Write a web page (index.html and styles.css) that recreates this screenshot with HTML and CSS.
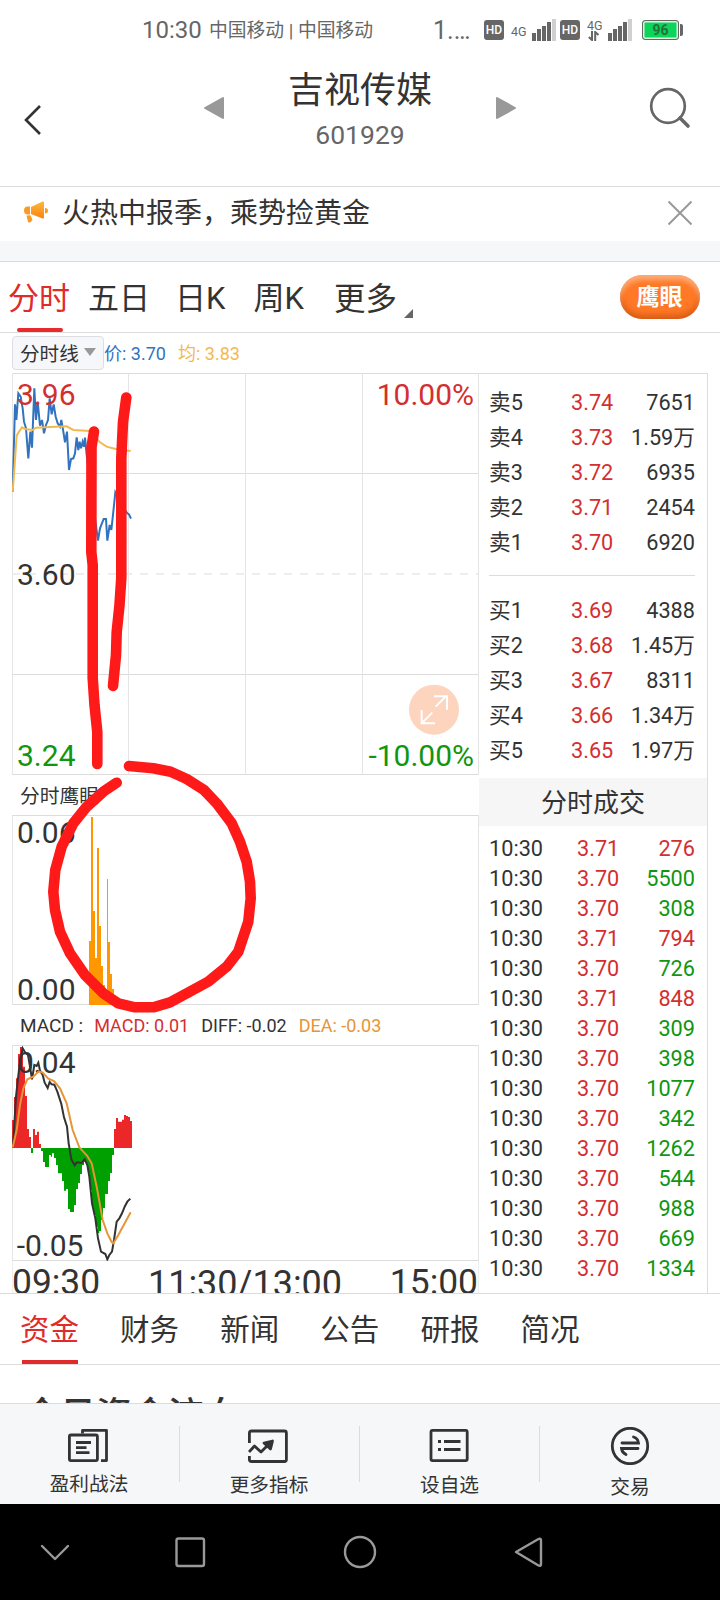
FILE: index.html
```html
<!DOCTYPE html>
<html lang="zh-Hans">
<head>
  <meta charset="UTF-8" />
  <meta name="viewport" content="width=720" />
  <title>吉视传媒 601929</title>
  <link rel="stylesheet" href="styles.css">
</head>
<body>
  <div class="status-bar">
    <span class="clock">10:30</span>
    <span class="carrier">中国移动 | 中国移动</span>
    <span class="speed">1.…</span>
    <span class="hd">HD</span>
    <span class="net">4G</span>
    <svg class="signal" width="24" height="22" viewBox="0 0 24 22">
      <path d="M0 14h4v8H0zM5 10h4v12H5zM10 7h4v15h-4zM15 3h4v19h-4z" fill="#666"/>
      <path d="M20 0h4v22h-4z" fill="#d0d0d0"/>
    </svg>
    <span class="hd">HD</span>
    <span class="net net-data">4G
      <svg width="12" height="10" viewBox="0 0 12 10" fill="none" stroke="#666" stroke-width="2"><path d="M4 0v9L.8 6M7.200 10V1l3.300 3"/></svg>
    </span>
    <svg class="signal" width="24" height="22" viewBox="0 0 24 22">
      <path d="M0 14h4v8H0zM5 10h4v12H5zM10 7h4v15h-4zM15 3h4v19h-4z" fill="#666"/>
      <path d="M20 0h4v22h-4z" fill="#d0d0d0"/>
    </svg>
    <span class="battery">96</span>
    <i class="battery-cap"></i>
  </div>

  <header class="header">
    <svg class="back" width="18" height="32" viewBox="0 0 18 32"><path d="M16 2 2 16l14 14" fill="none" stroke="#333" stroke-width="2.6"/></svg>
    <svg class="prev" width="20" height="22" viewBox="0 0 20 22"><path d="M19 1v20L1 11z" fill="#999" stroke="#999" stroke-width="2" stroke-linejoin="round"/></svg>
    <div class="stock">
      <h1>吉视传媒</h1>
      <p>601929</p>
    </div>
    <svg class="next" width="20" height="22" viewBox="0 0 20 22"><path d="M1 1v20l18-10z" fill="#999" stroke="#999" stroke-width="2" stroke-linejoin="round"/></svg>
    <svg class="search" width="42" height="42" viewBox="0 0 42 42" fill="none" stroke="#666" stroke-width="2.7">
      <circle cx="19" cy="19" r="16.8"/>
      <path d="m31 31 8 8" stroke-width="3.6" stroke-linecap="round"/>
    </svg>
  </header>

  <div class="notice">
    <svg width="26" height="24" viewBox="0 0 26 24">
      <defs>
        <linearGradient id="horn" x1="0" y1="0" x2="0" y2="1">
          <stop offset="0" stop-color="#fdb83c"/>
          <stop offset="1" stop-color="#f9820f"/>
        </linearGradient>
      </defs>
      <path d="M8 7 19.500 1.500Q21 1 21 2.500V17q0 2-1.500 1.500L8 14z" fill="url(#horn)"/>
      <path d="M7 6.500v8H4q-3-.5-3-4t3-4zM22 8q3 0 3 2.700T22 13.500z" fill="#f99a25"/>
      <path d="m3.500 15.500 4-.3 2 4.800-2.500 2.800-2-.8z" fill="#f99a25"/>
    </svg>
    <span>火热中报季，乘势捡黄金</span>
    <svg class="close" width="26" height="26" viewBox="0 0 26 26"><path d="m1.500 1.500 23 23m0-23-23 23" stroke="#999" stroke-width="2"/></svg>
  </div>

  <nav class="periods">
    <a class="active">分时</a>
    <a>五日</a>
    <a>日K</a>
    <a>周K</a>
    <a class="more">更多</a>
    <button class="eagle">鹰眼</button>
  </nav>

  <main class="quote">
    <section class="charts">
      <div class="legend">
        <span class="select">分时线<i></i></span>
        <span class="price">价: 3.70</span>
        <span class="avg">均: 3.83</span>
      </div>

      <!-- price, three units per pixel -->
      <svg class="chart" width="467" height="402" viewBox="36 24 1401 1206">
        <g class="grid">
          <path d="M36 25.500H1437M36 325.500H1437M36 928.500H1437M36 1228.500H1437"/>
          <path d="M37.500 24V1230M385.500 24V1230M736.500 24V1230M1087.500 24V1230M1435.500 24V1230" class="vert"/>
          <path d="M36 627H1437" class="dash"/>
        </g>
        <polyline class="line-price" points="38,380 45,118 49,165 55,85 62,95 68,130 72,170 78,190 85,280 91,200 96,248 103,70 108,165 113,110 120,182 126,165 132,205 138,180 144,165 149,100 155,148 161,118 167,155 173,175 180,185 184,165 190,200 195,232 201,200 207,315 213,282 220,280 225,265 230,217 235,255 239,230 243,250 248,230 252,245 255,218 260,270 294,527 300,490 311,462 318,462 322,527 329,480 334,495 340,440 346,382 364,420 382,445 387,448 393,461"/>
        <polyline class="line-avg" points="38,380 44,300 50,212 57,200 66,187 75,192 98,195 108,188 150,186 200,184 220,195 270,198 300,232 320,245 350,253 392,258"/>
        <g class="labels">
          <text x="51" y="119" class="up">3.96</text>
          <text x="51" y="661">3.60</text>
          <text x="51" y="1202" class="down">3.24</text>
          <text x="1422" y="120" class="up end">10.00%</text>
          <text x="1422" y="1202" class="down end">-10.00%</text>
        </g>
        <g transform="translate(1302 1034)">
          <circle r="75" fill="#fdd4bd"/>
          <path d="M5-9 38-42M0-40H39V0M-5 9-37 41M-37 1V41H3" fill="none" stroke="#fff" stroke-width="6"/>
        </g>
      </svg>

      <div class="chart-title">分时鹰眼</div>
      <svg class="chart" width="467" height="190" viewBox="36 165 1401 570">
        <g class="grid">
          <path d="M36 166.500H1437M36 733.500H1437"/>
          <path d="M37.500 165V735M1435.500 165V735" class="vert"/>
        </g>
        <g class="labels">
          <text x="51" y="248">0.06</text>
          <text x="51" y="719">0.00</text>
        </g>
        <path fill="#ff9800" d="M267 735V543H273V171H279V453H285V594H291V264H297V498H303V618H309V675H315V695H321V357H324V546H330V642H336V687H342V735z"/>
      </svg>

      <div class="chart-title macd-title">
        <span>MACD :</span>
        <span class="up">MACD: 0.01</span>
        <span>DIFF: -0.02</span>
        <span class="dea">DEA: -0.03</span>
      </div>
      <svg class="chart" width="467" height="216" viewBox="36 45 1401 648">
        <g class="grid">
          <path d="M36 46.500H1437M36 691.500H1437"/>
          <path d="M37.500 45V693M1435.500 45V693" class="vert"/>
        </g>
        <path fill="#eb2727" d="M36 354V270H42V201H48V145H54V72H60V51H69V110H75V198H81V297H87V321H93V354zM99 354V297H105V315H111V305H117V342H123V354zM342 354V297H348V264H354V275H366V269H372V255H378V258H384V261H390V273H396V354z"/>
        <path fill="#00a000" d="M93 354V369H99V354zM123 354V363H129V396H135V411H147V375H153V380H156V370H162V384H168V405H174V430H186V453H192V482H198V477H204V537H210V546H222V525H228V477H234V459H240V432H246V405H252V395H258V405H264V430H270V480H276V530H282V555H288V590H294V609H298V603H303V570H309V534H315V492H324V453H330V429H336V375H342V354z"/>
        <g class="labels">
          <text x="51" y="128">0.04</text>
          <text x="50" y="677">-0.05</text>
        </g>
        <polyline class="line-diff" points="39,350 48,200 58,110 68,55 76,68 84,75 90,110 96,148 103,105 110,108 115,98 120,122 128,135 134,158 143,174 149,156 155,163 163,164 172,185 184,222 192,262 201,290 206,340 214,388 224,406 230,397 245,399 254,388 262,405 268,440 276,520 286,565 294,625 303,665 316,672 322,688 328,675 336,665 342,630 350,575 358,565 366,550 374,530 382,515 391,506"/>
        <polyline class="line-dea" points="38,352 50,300 60,225 70,175 82,148 100,140 116,124 128,128 145,146 162,153 180,175 200,220 218,300 238,352 262,378 275,400 290,470 308,570 322,610 335,636 340,640 355,615 392,547"/>
      </svg>
      <div class="axis"><span>09:30</span><span class="noon">11:30/13:00</span><span>15:00</span></div>
    </section>

    <aside class="panel">
      <div class="book" id="sells"></div>
      <hr>
      <div class="book" id="buys"></div>
      <h2>分时成交</h2>
      <div class="trades" id="trades"></div>
    </aside>

    <!-- hand-drawn marks over the charts -->
    <svg class="marks" width="479" height="960" viewBox="0 333 479 960">
      <polyline points="94,431.500 91.500,447 91.300,552 92.700,565 92.700,678 94.500,705 97.300,732 97.300,764"/>
      <polyline points="126.300,397.500 123,422 121.300,458 121.300,578 119.500,605 116.700,632 116,655 113,686"/>
      <polyline points="129,766 153.300,768.300 170.700,771.700 186.700,779 204,790 216.700,803.300 231.700,823.300 240,841.700 246.700,861.700 250,881.700 250.700,898.300 248.300,921.700 238.300,951.700 226.700,966.700 208.300,981.700 186.700,993.300 170,1002.300 153.300,1007.300 135,1007.300 118.300,1003.300 103.300,993.300 85,975 70,953.300 60,931.700 55,910 53.300,891.700 55.300,870 61.700,846.700 73.300,823.300 86.700,806.700 103.300,791.700 116.700,782.700"/>
    </svg>
  </main>

  <nav class="info-tabs">
    <a class="active">资金</a>
    <a>财务</a>
    <a>新闻</a>
    <a>公告</a>
    <a>研报</a>
    <a>简况</a>
  </nav>
  <div class="flow-title">今日资金流向</div>

  <footer class="toolbar">
    <a>
      <svg width="42" height="38" viewBox="0 0 42 38" fill="none" stroke="#333" stroke-width="2.800" stroke-linejoin="round">
        <rect x="1.400" y="8" width="28" height="25.600" rx="1.500"/>
        <path d="M14.500 6.500V3.400h24v30.200h-5.500M8 15.500h15M8 20.600h10.500M8 25.700h13.500"/>
      </svg>
      <span>盈利战法</span>
    </a>
    <a>
      <svg width="42" height="38" viewBox="0 0 42 38" fill="none" stroke="#333" stroke-width="2.800" stroke-linejoin="round">
        <path d="M1.400 16V6q0-2 2-2h33q2 0 2 2v26.500q0 2-2 2h-33q-2 0-2-2V29"/>
        <path d="m1 25 5.500-6 6.500 6 8-8" />
        <path d="m16 16 8.500-2-2 8z" fill="#333"/>
      </svg>
      <span class="low">更多指标</span>
    </a>
    <a>
      <svg width="42" height="38" viewBox="0 0 42 38" fill="none" stroke="#333" stroke-width="2.800">
        <rect x="2" y="3.400" width="36.200" height="30.200" rx="1.500"/>
        <path d="M15 14.500h16.500M15 22.500h16.500M9 14.500h3M9 22.500h3"/>
      </svg>
      <span class="low">设自选</span>
    </a>
    <a>
      <svg width="42" height="38" viewBox="0 0 42 38" fill="none" stroke="#333" stroke-width="2.800" stroke-linecap="round">
        <circle cx="21" cy="19" r="17.700"/>
        <path d="M13 16h16.500q-.3-4.500-5-6M29 21.500H12.500q.5 4 4.500 6"/>
      </svg>
      <span class="lower">交易</span>
    </a>
  </footer>

  <div class="system-nav">
    <svg width="720" height="96" viewBox="0 0 720 96" fill="none" stroke="#999" stroke-width="2.400" stroke-linecap="round" stroke-linejoin="round">
      <path d="m42 42 13 13 13-13"/>
      <rect x="176.500" y="34.500" width="27.500" height="27.500" rx="2"/>
      <circle cx="360" cy="48" r="15"/>
      <path d="M516 48 538.500 35Q541 34 541 36.500V60q0 2.500-2.500 1.500z"/>
    </svg>
  </div>

  <script>
    const sells = [
      ["卖5", "3.74", "7651"],
      ["卖4", "3.73", "1.59万"],
      ["卖3", "3.72", "6935"],
      ["卖2", "3.71", "2454"],
      ["卖1", "3.70", "6920"]
    ];
    const buys = [
      ["买1", "3.69", "4388"],
      ["买2", "3.68", "1.45万"],
      ["买3", "3.67", "8311"],
      ["买4", "3.66", "1.34万"],
      ["买5", "3.65", "1.97万"]
    ];
    const trades = [
      ["3.71", 276, "up"], ["3.70", 5500, "down"], ["3.70", 308, "down"],
      ["3.71", 794, "up"], ["3.70", 726, "down"], ["3.71", 848, "up"],
      ["3.70", 309, "down"], ["3.70", 398, "down"], ["3.70", 1077, "down"],
      ["3.70", 342, "down"], ["3.70", 1262, "down"], ["3.70", 544, "down"],
      ["3.70", 988, "down"], ["3.70", 669, "down"], ["3.70", 1334, "down"]
    ];

    function row(name, price, volume, cls) {
      return `<div class="row"><span>${name}</span><span class="up">${price}</span><span class="${cls}">${volume}</span></div>`;
    }

    document.getElementById("sells").innerHTML = sells.map(r => row(r[0], r[1], r[2], "")).join("");
    document.getElementById("buys").innerHTML = buys.map(r => row(r[0], r[1], r[2], "")).join("");
    document.getElementById("trades").innerHTML = trades.map(r => row("10:30", r[0], r[1], r[2])).join("");
  </script>
</body>
</html>
```
FILE: styles.css
```css
* {
  box-sizing: border-box;
}
body {
  margin: 0;
  width: 720px;
  height: 1600px;
  overflow: hidden;
  background: #fff;
  color: #333;
  font-family: Roboto, "Noto Sans CJK SC", sans-serif;
}
svg {
  display: block;
  flex: none;
}
h1, h2, p {
  margin: 0;
  font-weight: 400;
}
.up {
  color: #d32f2f;
  fill: #d32f2f;
}
.down {
  color: #109610;
  fill: #109610;
}

/* status bar */
.status-bar {
  display: flex;
  align-items: center;
  height: 60px;
  padding-left: 142px;
  color: #666;
  white-space: nowrap;
}
.clock {
  width: 67px;
  font-size: 24px;
}
.carrier {
  width: 224px;
  padding-bottom: 4px;
  font-size: 18.800px;
}
.speed {
  width: 51px;
  font-size: 25px;
}
.hd {
  width: 20px;
  height: 20px;
  border-radius: 3px;
  background: #666;
  color: #fff;
  font-size: 12px;
  font-weight: 500;
  line-height: 20px;
  text-align: center;
}
.net {
  width: 28px;
  padding-left: 7px;
  padding-top: 2px;
  font-size: 12.500px;
}
.net-data {
  padding-top: 0;
  line-height: 11px;
}
.net-data svg {
  margin-left: 1px;
}
.signal {
  margin-right: 4px;
}
.battery {
  width: 37px;
  height: 20px;
  margin-left: 6px;
  border: 1.5px solid #666;
  border-radius: 3px;
  background: #0bd65a;
  box-shadow: inset 0 0 0 1.5px #d5f5df;
  color: #24703c;
  font-size: 14px;
  font-weight: 700;
  line-height: 18px;
  text-align: center;
}
.battery-cap {
  width: 3px;
  height: 12px;
  margin-left: 1px;
  border-radius: 0 2px 2px 0;
  background: #666;
}

/* title */
.header {
  display: flex;
  align-items: flex-start;
  height: 127px;
  padding-left: 24px;
  border-bottom: 1px solid #dcdcdc;
}
.back {
  margin-top: 44px;
}
.prev {
  margin: 37px 0 0 162px;
}
.stock {
  width: 272px;
  text-align: center;
}
.stock h1 {
  margin-top: 9px;
  font-size: 36px;
  line-height: 44px;
}
.stock p {
  margin-top: 7px;
  color: #666;
  font-size: 26.500px;
  line-height: 30px;
}
.next {
  margin-top: 37px;
}
.search {
  margin: 27px 0 0 133px;
}

.notice {
  display: flex;
  align-items: center;
  height: 54px;
  padding: 0 27px 4px 23px;
  font-size: 28px;
}
.notice span {
  flex: 1;
  margin-left: 13px;
  padding-bottom: 2px;
}
.notice .close {
  margin-top: 2px;
}

.periods {
  display: flex;
  align-items: center;
  height: 92px;
  padding-left: 8px;
  border-top: 20px solid #f6f7f9;
  border-bottom: 1px solid #dcdcdc;
  box-shadow: inset 0 1px #dcdcdc;
  font-size: 31px;
}
.periods a {
  display: flex;
  align-items: center;
  justify-content: center;
  height: 71px;
  padding-bottom: 2px;
  margin-right: 18px;
  position: relative;
}
.periods a:nth-child(2) {
  margin-right: 25px;
}
.periods a:nth-child(3) {
  margin-right: 28px;
}
.periods a:nth-child(4) {
  margin-right: 30px;
}
.periods .active {
  color: #e02b2b;
}
.periods .active::after {
  content: "";
  position: absolute;
  left: 9px;
  bottom: 0;
  width: 46px;
  height: 4px;
  border-radius: 2px;
  background: #e92a2a;
}
.periods .more {
  font-size: 31.500px;
}
.periods .more::after {
  content: "";
  position: absolute;
  right: -16px;
  bottom: 14px;
  border-left: 9px solid transparent;
  border-bottom: 9px solid #666;
}
.eagle {
  width: 80px;
  height: 44px;
  margin: 0 20px 0 auto;
  padding: 0 1px 3px 0;
  border: 0;
  border-radius: 22px;
  background: #ff7926;
  box-shadow: inset 0 5px 5px rgba(255, 205, 175, .6), inset 0 -4px 6px rgba(185, 70, 10, .6);
  color: #fff;
  font: bold 23px Roboto, "Noto Sans CJK SC", sans-serif;
}

/* charts */
.quote {
  display: flex;
  position: relative;
  height: 960px;
  overflow: hidden;
}
.charts {
  width: 479px;
  padding-left: 12px;
}
.legend {
  display: flex;
  align-items: center;
  height: 40px;
  font-size: 18px;
}
.select {
  display: flex;
  align-items: center;
  width: 92px;
  height: 34px;
  padding: 0 0 2px 7px;
  border: 1px solid #dcdee2;
  border-radius: 4px;
  background: #f6f7fb;
  font-size: 19.600px;
}
.select i {
  margin-left: 5px;
  border: 6px solid transparent;
  border-top: 8px solid #999;
  border-bottom: 0;
}
.price {
  width: 74px;
  padding-bottom: 2px;
  color: #3273bf;
}
.avg {
  padding-bottom: 2px;
  color: #f2b94f;
}
.grid {
  fill: none;
  stroke: #dcdcdc;
  stroke-width: 3;
}
.grid .vert {
  stroke: #e4e4e4;
}
.grid .dash {
  stroke: #e8e8e8;
  stroke-width: 5;
  stroke-dasharray: 24 24;
}
.labels text {
  font-size: 90px;
}
.labels text:not([class]) {
  fill: #333;
}
.labels .end {
  text-anchor: end;
}
polyline {
  fill: none;
  stroke-width: 6;
}
.line-price {
  stroke: #3273bf;
}
.line-avg {
  stroke: #f2b94f;
}
.line-diff {
  stroke: #333;
}
.line-dea {
  stroke: #e69537;
}
.chart-title {
  display: flex;
  align-items: center;
  height: 40px;
  padding: 0 0 2px 8px;
  font-size: 19.800px;
}
.macd-title {
  padding-bottom: 0;
  font-size: 18px;
}
.macd-title span {
  margin-right: 12px;
}
.macd-title span:first-child {
  margin-right: 11px;
  font-size: 19px;
}
.dea {
  color: #e69537;
}
.axis {
  display: flex;
  justify-content: space-between;
  height: 32px;
  border-left: 1px solid #eee;
  border-right: 1px solid #eee;
  overflow: hidden;
  font-size: 35.400px;
  line-height: 42px;
}
.axis span:first-child {
  margin-left: -1px;
}
.axis .noon {
  padding-top: 2px;
  font-size: 36px;
}
.marks {
  position: absolute;
  left: 0;
  top: 0;
}
.marks polyline {
  stroke: #ff1a1a;
  stroke-width: 10.600;
  stroke-linecap: round;
  stroke-linejoin: round;
}

/* order book */
.panel {
  width: 229px;
  margin-top: 40px;
  border-top: 1px solid #dcdcdc;
  border-right: 1px solid #dcdcdc;
  font-size: 21.700px;
}
.row {
  display: grid;
  grid-template-columns: 82px 1fr auto;
  height: 35px;
  padding: 0 12px 0 10px;
  line-height: 35px;
}
.book {
  padding-top: 11px;
}
.panel hr {
  height: 1px;
  margin: 15px 12px 6px 10px;
  border: 0;
  background: #dcdcdc;
}
.panel h2 {
  height: 48px;
  margin-top: 10px;
  background: #f6f6f6;
  font-size: 26px;
  line-height: 51px;
  text-align: center;
}
.trades {
  padding-top: 8px;
}
.trades .row {
  grid-template-columns: 88px 1fr auto;
  height: 30px;
  line-height: 30px;
}

/* info tabs */
.info-tabs {
  display: flex;
  height: 72px;
  padding-left: 20px;
  gap: 41px;
  border-top: 1px solid #dcdcdc;
  border-bottom: 1px solid #dcdcdc;
  font-size: 29.500px;
  line-height: 73px;
}
.info-tabs a {
  width: 59.100px;
  height: 70px;
  white-space: nowrap;
}
.info-tabs .active {
  color: #e02b2b;
  background: linear-gradient(#e02b2b, #e02b2b) 2px 100% / 56px 4px no-repeat;
}
.flow-title {
  height: 38px;
  padding: 29px 0 0 24px;
  overflow: hidden;
  font-size: 36px;
  font-weight: 500;
  line-height: 44px;
}

.toolbar {
  display: flex;
  height: 101px;
  border-top: 1px solid #dcdcdc;
  background: #f6f7f9;
  font-size: 19.700px;
}
.toolbar a {
  display: flex;
  flex-direction: column;
  align-items: center;
  width: 180px;
  padding: 23px 2px 0 0;
  background: linear-gradient(#dcdcdc, #dcdcdc) 179px 22px / 1px 56px no-repeat;
  line-height: 24px;
}
.toolbar a:nth-child(3) {
  padding-right: 1px;
}
.toolbar a:last-child {
  padding-right: 0;
  background: none;
}
.toolbar span {
  margin-top: 8px;
}
.toolbar .low {
  margin-top: 9px;
}
.toolbar .lower {
  margin-top: 11px;
}
.system-nav {
  height: 96px;
  background: #000;
}
```
